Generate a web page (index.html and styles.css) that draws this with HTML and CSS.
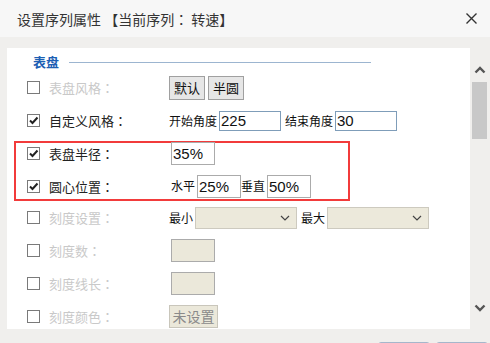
FILE: index.html
```html
<!DOCTYPE html>
<html lang="zh-CN">

<head>
    <meta charset="UTF-8">
    <meta name="viewport" content="width=device-width, initial-scale=1.0">
    <title>设置序列属性</title>
    <link rel="stylesheet" href="styles.css">
</head>

<body>
    <div class="dialog">
        <div class="header">
            <span class="title">设置序列属性 【当前序列<span class="colon" lang="ja">：</span> 转速】</span>
            <svg class="close" width="11" height="11" viewBox="0 0 11 11">
                <path d="M0.5 0.5 L10.5 10.5 M10.5 0.5 L0.5 10.5" stroke="#333" stroke-width="1.4" fill="none" />
            </svg>
        </div>

        <div class="main">
            <div class="panel">
                <div class="section-title">
                    <span>表盘</span>
                    <span class="section-line"></span>
                </div>

                <div class="row">
                    <span class="cb"></span>
                    <span class="label disabled">表盘风格<span class="colon" lang="ja">：</span></span>
                    <div class="value">
                        <button class="btn">默认</button>
                        <button class="btn">半圆</button>
                    </div>
                </div>

                <div class="row">
                    <span class="cb checked"><svg width="11" height="11" viewBox="0 0 11 11"><path d="M2 5.5 L4.5 8 L9.5 2.5" stroke="#222" stroke-width="2" fill="none" /></svg></span>
                    <span class="label">自定义风格<span class="colon" lang="ja">：</span></span>
                    <div class="value">
                        <span class="text">开始角度</span>
                        <input class="input blue wide" type="text" value="225">
                        <span class="text after">结束角度</span>
                        <input class="input blue wide" type="text" value="30">
                    </div>
                </div>

                <div class="highlight">
                    <div class="row">
                        <span class="cb checked"><svg width="11" height="11" viewBox="0 0 11 11"><path d="M2 5.5 L4.5 8 L9.5 2.5" stroke="#222" stroke-width="2" fill="none" /></svg></span>
                        <span class="label">表盘半径<span class="colon" lang="ja">：</span></span>
                        <div class="value">
                            <input class="input small first" type="text" value="35%">
                        </div>
                    </div>
                    <div class="row">
                        <span class="cb checked"><svg width="11" height="11" viewBox="0 0 11 11"><path d="M2 5.5 L4.5 8 L9.5 2.5" stroke="#222" stroke-width="2" fill="none" /></svg></span>
                        <span class="label">圆心位置<span class="colon" lang="ja">：</span></span>
                        <div class="value">
                            <span class="text indent">水平</span>
                            <input class="input small" type="text" value="25%">
                            <span class="text">垂直</span>
                            <input class="input small" type="text" value="50%">
                        </div>
                    </div>
                </div>

                <div class="row">
                    <span class="cb"></span>
                    <span class="label disabled">刻度设置<span class="colon" lang="ja">：</span></span>
                    <div class="value">
                        <span class="text">最小</span>
                        <div class="select">
                            <svg width="10" height="6" viewBox="0 0 10 6"><path d="M1 1 L5 5 L9 1" stroke="#444" stroke-width="1.2" fill="none" /></svg>
                        </div>
                        <span class="text after">最大</span>
                        <div class="select">
                            <svg width="10" height="6" viewBox="0 0 10 6"><path d="M1 1 L5 5 L9 1" stroke="#444" stroke-width="1.2" fill="none" /></svg>
                        </div>
                    </div>
                </div>

                <div class="row">
                    <span class="cb"></span>
                    <span class="label disabled">刻度数<span class="colon" lang="ja">：</span></span>
                    <div class="value">
                        <input class="input small off first" type="text" value="" disabled>
                    </div>
                </div>

                <div class="row">
                    <span class="cb"></span>
                    <span class="label disabled">刻度线长<span class="colon" lang="ja">：</span></span>
                    <div class="value">
                        <input class="input small off first" type="text" value="" disabled>
                    </div>
                </div>

                <div class="row">
                    <span class="cb"></span>
                    <span class="label disabled">刻度颜色<span class="colon" lang="ja">：</span></span>
                    <div class="value">
                        <button class="btn unset">未设置</button>
                    </div>
                </div>
            </div>

            <div class="scrollbar">
                <svg class="arrow-up" width="12" height="8" viewBox="0 0 12 8"><path d="M1.5 6.5 L6 2 L10.5 6.5" stroke="#555" stroke-width="2.4" fill="none" /></svg>
                <div class="thumb"></div>
                <svg class="arrow-down" width="12" height="8" viewBox="0 0 12 8"><path d="M1.5 1.5 L6 6 L10.5 1.5" stroke="#555" stroke-width="2.4" fill="none" /></svg>
            </div>
        </div>

        <div class="footer">
            <span class="foot-btn"></span>
            <span class="foot-btn"></span>
        </div>
    </div>
</body>

</html>
```

FILE: styles.css
```css
body {
    margin: 0;
    padding: 0;
    background-color: #f0efed;
    font-family: "Noto Sans CJK SC", "Liberation Sans", sans-serif;
    overflow: hidden;
}

.dialog {
    width: 490px;
    height: 343px;
    display: flex;
    flex-direction: column;
    overflow: hidden;
}

.header {
    height: 37px;
    flex: none;
    background-color: #f7f7f7;
    display: flex;
    align-items: center;
    justify-content: space-between;
    padding: 0 13px 0 17px;
}

.title {
    font-size: 14px;
    line-height: 16px;
    color: #333;
}

.colon {
    font-family: "Noto Sans CJK JP", sans-serif;
}

.main {
    display: flex;
    height: 281px;
    padding: 11px 0 0 7px;
    flex: none;
}

.panel {
    width: 463px;
    height: 281px;
    background: white;
    overflow: hidden;
}

.section-title {
    height: 20px;
    padding: 3px 0 0 26px;
    display: flex;
    align-items: center;
    font-size: 13px;
    line-height: 15px;
    font-weight: bold;
    color: #1d5fb4;
}

.section-line {
    width: 302px;
    height: 1px;
    margin: 3px 0 0 10px;
    background-color: #9cb5d0;
}

.row {
    display: flex;
    align-items: center;
    height: 33px;
    padding-left: 20px;
}

.cb {
    width: 13px;
    height: 13px;
    box-sizing: border-box;
    border: 1px solid #7a7a7a;
    margin-right: 9px;
    display: flex;
    align-items: center;
    justify-content: center;
    flex: none;
}

.label {
    width: 120px;
    flex: none;
    font-size: 13px;
    line-height: 15px;
    color: #222;
}

.label.disabled {
    color: #c9c9c9;
}

.value {
    display: flex;
    align-items: center;
}

.text {
    font-size: 12px;
    line-height: 14px;
    color: #111;
    margin-right: 2px;
}

.text.after {
    margin-left: 4px;
}

.text.indent {
    margin-left: 2px;
}

.btn {
    height: 24px;
    padding: 0 4px;
    margin-right: 3px;
    background-color: #e6e6e6;
    border: 1px solid #a0a0a0;
    font-family: "Noto Sans CJK SC", sans-serif;
    font-size: 13px;
    line-height: 15px;
    color: #111;
}

.btn.unset {
    width: 49px;
    height: 23px;
    padding: 0;
    background-color: #ebe8da;
    border-color: #c9c6bb;
    color: #8a8a8a;
    font-size: 14px;
}

.input {
    box-sizing: border-box;
    padding: 0 1px;
    font-family: "Liberation Sans", sans-serif;
    font-size: 15px;
    color: #111;
    background: white;
    outline: none;
    border-radius: 0;
}

.input.blue {
    border: 1px solid #7f9db9;
    height: 20px;
}

.input.wide {
    width: 62px;
}

.input.small {
    width: 44px;
    height: 23px;
    border: 1px solid #ababab;
}

.input.first {
    margin-left: 2px;
}

.input.off {
    background-color: #ebe8da;
}

.highlight {
    box-sizing: border-box;
    width: 336px;
    margin: 4px 0 0 7px;
    border: 2px solid #f23b3b;
    padding-bottom: 3px;
}

.highlight .row {
    height: 20px;
    padding-left: 11px;
}

.highlight .row + .row {
    margin-top: 13px;
}

.select {
    box-sizing: border-box;
    width: 102px;
    height: 22px;
    background-color: #ece9db;
    border: 1px solid #cdcabf;
    display: flex;
    align-items: center;
    justify-content: flex-end;
    padding-right: 6px;
}

.scrollbar {
    width: 20px;
    height: 281px;
    display: flex;
    flex-direction: column;
    align-items: center;
}

.arrow-up {
    margin-top: 18px;
}

.thumb {
    width: 15px;
    height: 57px;
    margin-top: 8px;
    margin-right: 1px;
    background-color: #c8c8c8;
}

.arrow-down {
    margin-top: auto;
    margin-bottom: 17px;
}

.footer {
    height: 14px;
    flex: none;
    overflow: hidden;
    display: flex;
    justify-content: flex-end;
    gap: 6px;
    padding: 13px 2px 0 0;
    box-sizing: border-box;
}

.foot-btn {
    width: 52px;
    height: 20px;
    flex: none;
    box-sizing: border-box;
    border: 1px solid #a5b6cb;
    border-radius: 3px;
    background-color: #eef2f7;
}
```
